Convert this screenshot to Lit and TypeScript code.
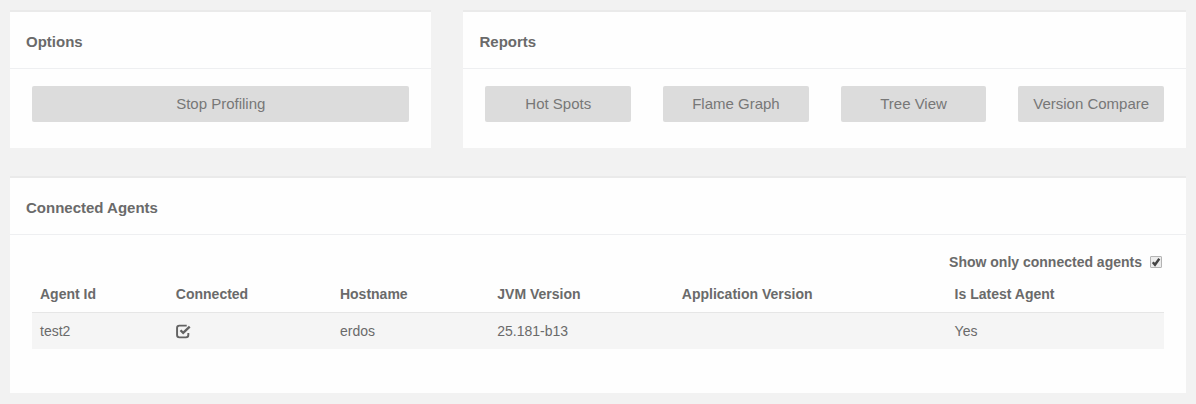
import { LitElement, html, css, svg } from "lit";
import { customElement, state, property } from "lit/decorators.js";

interface Agent {
  id: string;
  connected: boolean;
  hostname: string;
  jvm: string;
  appVersion: string;
  latest: boolean;
}

@customElement("x-panel")
class XPanel extends LitElement {
  @property() heading = "";

  static styles = css`
    :host {
      display: block;
      background: #fefefe;
      border-top: 2px solid #eaeaea;
    }
    .heading {
      margin: 0;
      padding: 20px 16px 16px;
      font-size: 15px;
      line-height: 20px;
      font-weight: 700;
      border-bottom: 1px solid #eeeff1;
    }
  `;

  render() {
    return html`<h2 class="heading">${this.heading}</h2><slot></slot>`;
  }
}

@customElement("app-root")
class AppRoot extends LitElement {
  @state() private onlyConnected = true;

  private reports = ["Hot Spots", "Flame Graph", "Tree View", "Version Compare"];

  private agents: Agent[] = [
    { id: "test2", connected: true, hostname: "erdos", jvm: "25.181-b13", appVersion: "", latest: true },
  ];

  static styles = css`
    :host {
      display: block;
      box-sizing: border-box;
      min-height: 100vh;
      padding: 10px;
      background: #f2f2f2;
      color: #6a6a6a;
      font-family: "Liberation Sans", Arial, sans-serif;
      font-size: 14px;
      line-height: 20px;
    }
    .top {
      display: grid;
      grid-template-columns: 7fr 12fr;
      gap: 32px;
      margin-bottom: 28px;
    }
    .actions {
      display: grid;
      grid-auto-flow: column;
      grid-auto-columns: 1fr;
      gap: 32px;
      padding: 17px 22px 26px;
    }
    .btn {
      height: 36px;
      padding: 0;
      border: 0;
      border-radius: 2px;
      background: #dcdcdc;
      color: #777;
      font: inherit;
      font-size: 15px;
      white-space: nowrap;
    }
    .agents {
      padding: 17px 22px 44px;
    }
    .filter {
      display: flex;
      justify-content: flex-end;
      align-items: center;
      gap: 8px;
      font-weight: 700;
      padding-bottom: 4px;
    }
    .check {
      appearance: none;
      box-sizing: border-box;
      width: 12px;
      height: 12px;
      margin: 0 2px 0 0;
      border: 1px solid #b4b4b4;
      border-radius: 1px;
      background: #ececec;
    }
    .check:checked {
      background: #ececec url("data:image/svg+xml,%3Csvg xmlns='http://www.w3.org/2000/svg' viewBox='0 0 10 10'%3E%3Cpath d='M1.8 5.200l2.200 2.600L8.300 1.800' fill='none' stroke='%23444' stroke-width='2.400'/%3E%3C/svg%3E");
    }
    .table {
      width: 100%;
      border-collapse: separate;
      border-spacing: 0;
      table-layout: fixed;
      text-align: left;
    }
    th,
    td {
      box-sizing: border-box;
      padding: 8px;
    }
    th {
      border-bottom: 1px solid #e6e6e6;
    }
    td {
      height: 36px;
      background: #f5f5f5;
    }
    .c-id { width: 12%; }
    .c-con { width: 14.5%; }
    .c-host { width: 13.9%; }
    .c-jvm { width: 16.3%; }
    .c-app { width: 24.1%; }
    .icon {
      display: block;
      width: 15px;
      height: 15px;
    }
  `;

  private toggle(e: Event) {
    this.onlyConnected = (e.target as HTMLInputElement).checked;
  }

  render() {
    const rows = this.agents.filter((a) => a.connected || !this.onlyConnected);
    return html`
      <div class="top">
        <x-panel heading="Options">
          <div class="actions"><button class="btn" type="button">Stop Profiling</button></div>
        </x-panel>
        <x-panel heading="Reports">
          <div class="actions">
            ${this.reports.map((r) => html`<button class="btn" type="button">${r}</button>`)}
          </div>
        </x-panel>
      </div>
      <x-panel heading="Connected Agents">
        <div class="agents">
          <label class="filter">
            Show only connected agents
            <input class="check" type="checkbox" .checked=${this.onlyConnected} @change=${this.toggle} />
          </label>
          <table class="table">
            <thead>
              <tr>
                <th class="c-id">Agent Id</th>
                <th class="c-con">Connected</th>
                <th class="c-host">Hostname</th>
                <th class="c-jvm">JVM Version</th>
                <th class="c-app">Application Version</th>
                <th>Is Latest Agent</th>
              </tr>
            </thead>
            <tbody>
              ${rows.map(
                (a) => html`<tr>
                  <td>${a.id}</td>
                  <td>
                    ${a.connected
                      ? html`<svg class="icon" viewBox="0 0 14 14" fill="none" stroke="#636363" role="img" aria-label="Connected">
                          ${svg`<path d="M10 1.500H3.200Q1 1.500 1 3.700V10.300Q1 12.500 3.200 12.500H9.300Q11.500 12.500 11.500 10.300V8.500" stroke-width="1.800"/><path d="M4.200 5.800L6.700 8.300L12.800 2.400" stroke-width="2.200"/>`}
                        </svg>`
                      : ""}
                  </td>
                  <td>${a.hostname}</td>
                  <td>${a.jvm}</td>
                  <td>${a.appVersion}</td>
                  <td>${a.latest ? "Yes" : "No"}</td>
                </tr>`
              )}
            </tbody>
          </table>
        </div>
      </x-panel>
    `;
  }
}
